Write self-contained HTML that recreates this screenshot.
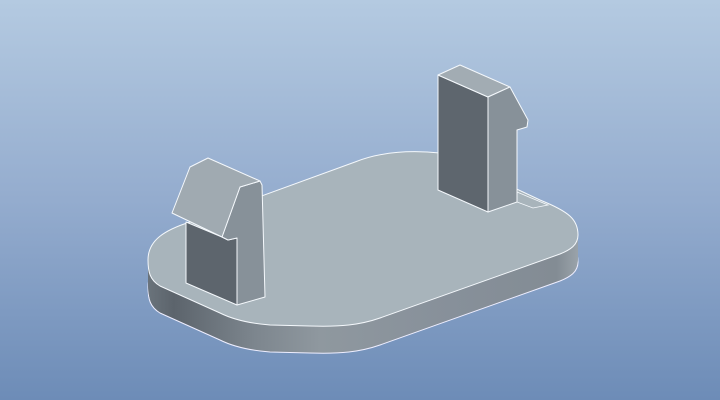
<!DOCTYPE html>
<html><head><style>
html,body{margin:0;padding:0;width:720px;height:400px;overflow:hidden}
body{background:linear-gradient(to bottom,#b4cae1 0%,#94acce 50%,#6d8cb7 100%)}
</style></head><body>
<svg width="720" height="400" viewBox="0 0 720 400" xmlns="http://www.w3.org/2000/svg">
<defs>
<linearGradient id="side" x1="148" y1="0" x2="578" y2="0" gradientUnits="userSpaceOnUse">
<stop offset="0" stop-color="#6a737b"/><stop offset="0.06" stop-color="#5c646c"/>
<stop offset="0.25" stop-color="#7d868e"/><stop offset="0.4" stop-color="#8f989f"/>
<stop offset="0.7" stop-color="#87909a"/><stop offset="0.95" stop-color="#838c94"/><stop offset="1" stop-color="#9aa3aa"/>
</linearGradient>
<path id="plate" d="M148,260 C148,240 165,230 190,222 L355,162 C380,152 410,150 440,153 L540,200 C570,212 578,220 578,235 C578,245 570,250 560,254 L380,318 C360,325 340,327 310,326 L270,325 C245,323 230,318 220,313 L160,286 C150,280 148,272 148,260 Z"/>
</defs>
<g fill="url(#side)">
<use href="#plate" y="27" stroke="#eef" stroke-width="1"/>
<use href="#plate" y="24"/><use href="#plate" y="21"/><use href="#plate" y="18"/><use href="#plate" y="15"/>
<use href="#plate" y="12"/><use href="#plate" y="9"/><use href="#plate" y="6"/><use href="#plate" y="3"/>
</g>
<use href="#plate" fill="#a8b4bb" stroke="#f4f8fc" stroke-width="1"/>
<!-- notch right -->
<polygon points="517,192 548,205 533,208 517,202" fill="#a8b4bb" stroke="#f4f8fc" stroke-width="0.8"/>
<!-- right post -->
<g stroke="#f4f8fc" stroke-width="1" stroke-linejoin="round">
<polygon points="438,75 438,190 488,212 488,97" fill="#5e666e"/>
<polygon points="438,75 460,65 510,87 488,97" fill="#a2acb3"/>
<polygon points="488,97 510,87 528,120 527,127 517,130 517,202 488,212" fill="#879199"/>
</g>
<!-- left post -->
<g stroke="#f4f8fc" stroke-width="1" stroke-linejoin="round">
<polygon points="186,222 222,237 228,240 237,238 237,305 186,283" fill="#5d656d"/>
<polygon points="240,187 260,181 262,185 265,297 237,305 237,238 228,240 222,237" fill="#879199"/>
<polygon points="172,213 190,167 208,158 260,181 240,187 222,237" fill="#a0aab1"/>
</g>
</svg>
</body></html>
